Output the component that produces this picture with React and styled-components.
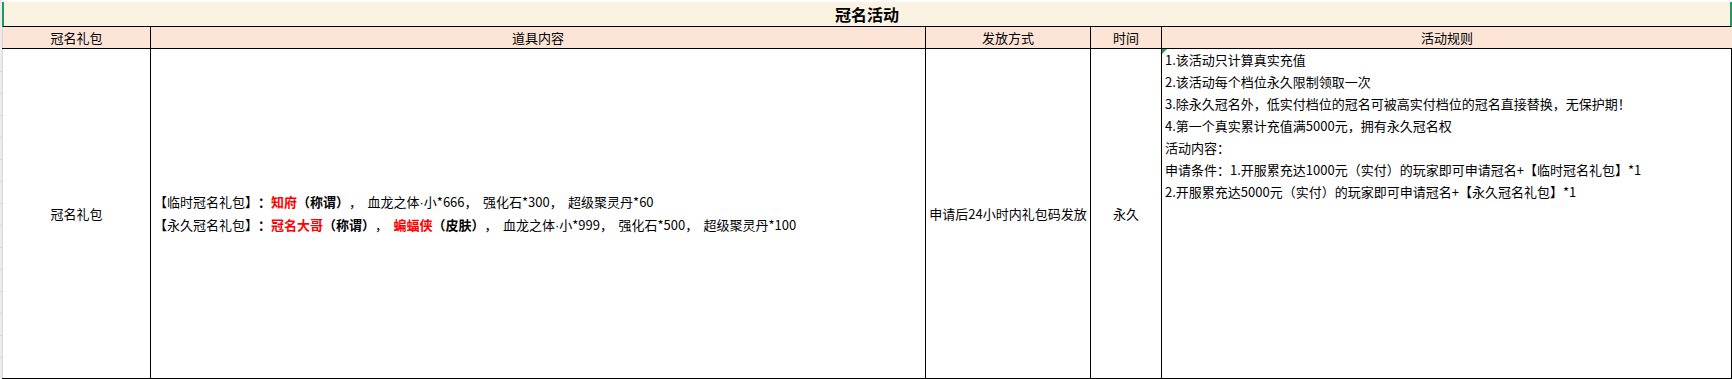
import React from "react";
import styled, { createGlobalStyle } from "styled-components";

const GlobalStyle = createGlobalStyle`
  html, body {
    margin: 0;
    padding: 0;
    background: #ffffff;
  }
  body {
    font-family: "Noto Sans CJK SC", "Noto Sans", sans-serif;
    font-size: 13px;
    color: #000000;
    text-spacing-trim: space-all;
  }
`;

const COLUMNS = "148px 775px 165px 71px 571px";

const Sheet = styled.div`
  display: flex;
  width: 1732px;
  height: 379px;
  padding-top: 2px;
  box-sizing: border-box;
`;

const RowGutter = styled.div`
  width: 2px;
  flex: none;
  margin-top: -2px;
  background-color: #ececec;
  background-image: repeating-linear-gradient(
    to bottom,
    transparent 0px,
    transparent 21px,
    #d6d6d6 21px,
    #d6d6d6 22px
  );
  background-position: 0 50px;
  background-repeat: no-repeat;
  background-size: 2px 330px;
`;

const Table = styled.div`
  width: 1730px;
  display: flex;
  flex-direction: column;
`;

const TitleRow = styled.div`
  height: 25px;
  box-sizing: border-box;
  background: #fbf3e2;
  border-left: 2px solid #1b9a63;
  border-right: 2px solid #1b9a63;
  border-bottom: 1px solid #000;
  display: flex;
  align-items: center;
  justify-content: center;
  font-size: 16px;
  font-weight: 700;
  line-height: 24px;
`;

const Row = styled.div`
  display: grid;
  grid-template-columns: ${COLUMNS};
  height: ${(p) => p.$height}px;
  box-sizing: border-box;
  border-bottom: 1px solid #000;
  background: ${(p) => p.$bg || "#fff"};
`;

const HeadCell = styled.div`
  box-sizing: border-box;
  border-left: ${(p) => (p.$first ? "1px solid #e2d3c8" : "1px solid #000")};
  display: flex;
  align-items: center;
  justify-content: center;
  line-height: 21px;
  white-space: nowrap;
`;

const Cell = styled.div`
  position: relative;
  box-sizing: border-box;
  border-left: ${(p) => (p.$first ? "1px solid #d9d9d9" : "1px solid #000")};
  border-right: ${(p) => (p.$last ? "1px solid #000" : "none")};
  display: flex;
  flex-direction: column;
  justify-content: ${(p) => (p.$top ? "flex-start" : "center")};
  align-items: ${(p) => (p.$left ? "flex-start" : "center")};
  padding: ${(p) => (p.$left ? "0 3px" : "0")};
  line-height: 22px;
  white-space: nowrap;
`;

const RulesCell = styled(Cell)`
  padding-top: 0;
  &::before {
    content: "";
    position: absolute;
    left: 0;
    top: 0;
    border-top: 5px solid #1b9a63;
    border-right: 5px solid transparent;
  }
`;

const Line = styled.div`
  line-height: 22px;
`;

const ItemLine = styled(Line)`
  word-spacing: 2.5px;
`;

const Red = styled.span`
  color: #ff0000;
  font-weight: 700;
`;

const Bold = styled.span`
  font-weight: 700;
`;

const Dot = styled.span`
  font-family: "Liberation Sans", sans-serif;
`;

const headers = ["冠名礼包", "道具内容", "发放方式", "时间", "活动规则"];

const rules = [
  "1.该活动只计算真实充值",
  "2.该活动每个档位永久限制领取一次",
  "3.除永久冠名外，低实付档位的冠名可被高实付档位的冠名直接替换，无保护期！",
  "4.第一个真实累计充值满5000元，拥有永久冠名权",
  "活动内容：",
  "申请条件：1.开服累充达1000元（实付）的玩家即可申请冠名+【临时冠名礼包】*1",
  "2.开服累充达5000元（实付）的玩家即可申请冠名+【永久冠名礼包】*1",
];

export default function App() {
  return (
    <>
      <GlobalStyle />
      <Sheet>
        <RowGutter />
        <Table>
          <TitleRow>冠名活动</TitleRow>
          <Row $height={22} $bg="#fce4d6">
            {headers.map((h, i) => (
              <HeadCell key={h} $first={i === 0}>
                {h}
              </HeadCell>
            ))}
          </Row>
          <Row $height={330}>
            <Cell $first>冠名礼包</Cell>
            <Cell $left>
              <ItemLine>
                【临时冠名礼包】<Bold>：</Bold>
                <Red>知府</Red>
                <Bold>（称谓）</Bold>， 血龙之体<Dot>·</Dot>小*666， 强化石*300， 超级聚灵丹*60
              </ItemLine>
              <ItemLine>
                【永久冠名礼包】<Bold>：</Bold>
                <Red>冠名大哥</Red>
                <Bold>（称谓）</Bold>， <Red>蝙蝠侠</Red>
                <Bold>（皮肤）</Bold>， 血龙之体<Dot>·</Dot>小*999， 强化石*500， 超级聚灵丹*100
              </ItemLine>
            </Cell>
            <Cell>申请后24小时内礼包码发放</Cell>
            <Cell>永久</Cell>
            <RulesCell $left $top $last>
              {rules.map((r) => (
                <Line key={r}>{r}</Line>
              ))}
            </RulesCell>
          </Row>
        </Table>
      </Sheet>
    </>
  );
}
